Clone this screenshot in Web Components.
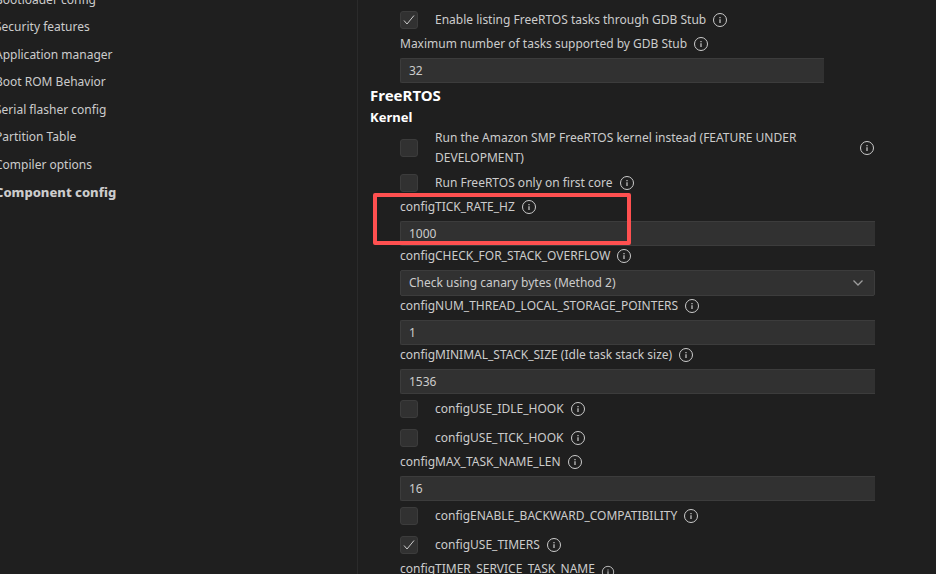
<!DOCTYPE html>
<html lang="en">
<head>
<meta charset="utf-8">
<title>SDK Configuration editor</title>
<style>
:root {
  --bg: #1f1f1f;
  --fg: #cccccc;
  --heading: #ffffff;
  --field: #313131;
  --border: #3c3c3c;
  --mark: #ff5050;
}
html {
  height: 100%;
}
body {
  margin: 0;
  height: 100%;
  overflow: hidden;
  background: var(--bg);
  color: var(--fg);
  font: 12px/20px "Noto Sans", sans-serif;
}
</style>
</head>
<body>
<config-editor>
  <menu-list slot="menu">
    <menu-entry>Bootloader config</menu-entry>
    <menu-entry>Security features</menu-entry>
    <menu-entry>Application manager</menu-entry>
    <menu-entry>Boot ROM Behavior</menu-entry>
    <menu-entry>Serial flasher config</menu-entry>
    <menu-entry>Partition Table</menu-entry>
    <menu-entry>Compiler options</menu-entry>
    <menu-entry selected>Component config</menu-entry>
  </menu-list>

  <config-group nested>
    <config-check checked>Enable listing FreeRTOS tasks through GDB Stub</config-check>
    <config-field value="32">Maximum number of tasks supported by GDB Stub</config-field>
  </config-group>

  <config-group>
    <h2 slot="title">FreeRTOS</h2>
    <h3 slot="title">Kernel</h3>
    <config-check>Run the Amazon SMP FreeRTOS kernel instead (FEATURE UNDER DEVELOPMENT)</config-check>
    <config-check>Run FreeRTOS only on first core</config-check>
    <config-field value="1000" marked>configTICK_RATE_HZ</config-field>
    <config-select value="Check using canary bytes (Method 2)">configCHECK_FOR_STACK_OVERFLOW</config-select>
    <config-field value="1">configNUM_THREAD_LOCAL_STORAGE_POINTERS</config-field>
    <config-field value="1536">configMINIMAL_STACK_SIZE (Idle task stack size)</config-field>
    <config-check>configUSE_IDLE_HOOK</config-check>
    <config-check>configUSE_TICK_HOOK</config-check>
    <config-field value="16">configMAX_TASK_NAME_LEN</config-field>
    <config-check>configENABLE_BACKWARD_COMPATIBILITY</config-check>
    <config-check checked>configUSE_TIMERS</config-check>
    <config-field value="Tmr Svc" type="string">configTIMER_SERVICE_TASK_NAME</config-field>
  </config-group>
</config-editor>

<script>
// Attach an open shadow root filled from a template string
function render(host, html) {
  const template = document.createElement('template');
  template.innerHTML = html;
  host.attachShadow({mode: 'open'}).appendChild(template.content.cloneNode(true));
}

// Page split: menu on the left, settings on the right
class ConfigEditor extends HTMLElement {
  constructor() {
    super();
    render(this, `
      <style>
        :host {
          display: flex;
          height: 100%;
          overflow: hidden;
        }
        nav {
          flex: none;
          width: 357px;
          border-right: 1px solid #2b2b2b;
          overflow: hidden;
        }
        main {
          flex: 1;
          min-width: 0;
          padding: 5px 61px 0 12px;
        }
      </style>
      <nav><slot name="menu"></slot></nav>
      <main><slot></slot></main>
    `);
  }
}

// Menu is scrolled a little, so its first entry and left edge are cut off
class MenuList extends HTMLElement {
  constructor() {
    super();
    render(this, `
      <style>
        :host {
          display: grid;
          grid-auto-rows: 1fr;
          min-height: 220px;
          margin: -14px 0 0 -5px;
        }
      </style>
      <slot></slot>
    `);
  }
}

class MenuEntry extends HTMLElement {
  constructor() {
    super();
    render(this, `
      <style>
        :host {
          display: flex;
          align-items: center;
        }
        :host([selected]) {
          font-size: 13px;
          font-weight: 800;
        }
        a {
          color: inherit;
          text-decoration: none;
          white-space: nowrap;
        }
      </style>
      <a href="#"><slot></slot></a>
    `);
  }
}

class ConfigGroup extends HTMLElement {
  constructor() {
    super();
    render(this, `
      <style>
        :host {
          display: block;
        }
        :host([nested]) {
          padding-right: 51px;
        }
        .items {
          padding-left: 30px;
        }
        ::slotted(h2) {
          margin: 0;
          color: var(--heading);
          font-size: 15px;
          line-height: 24px;
        }
        ::slotted(h3) {
          margin: 0;
          color: var(--heading);
          font-size: 13px;
          line-height: 21px;
        }
      </style>
      <slot name="title"></slot>
      <div class="items"><slot></slot></div>
    `);
  }
}

class InfoButton extends HTMLElement {
  constructor() {
    super();
    render(this, `
      <style>
        :host {
          display: flex;
          flex: none;
        }
        button {
          display: flex;
          padding: 0;
          border: 0;
          background: none;
          color: inherit;
          cursor: pointer;
        }
        svg {
          width: var(--icon-size, 16px);
          height: var(--icon-size, 16px);
        }
      </style>
      <button type="button" aria-label="Info">
        <svg viewBox="0 0 16 16" fill="none" stroke="currentColor">
          <circle cx="8" cy="8" r="6.5"/>
          <path d="M8 7.200v3.800M8 5v1.200" stroke-width="1.2"/>
        </svg>
      </button>
    `);
  }
}

class ConfigCheck extends HTMLElement {
  constructor() {
    super();
    render(this, `
      <style>
        :host {
          display: flex;
          align-items: center;
          gap: 6px;
          min-height: 29px;
        }
        .box {
          display: grid;
          flex: none;
          margin-right: 11px;
        }
        input, svg {
          grid-area: 1 / 1;
        }
        input {
          appearance: none;
          box-sizing: border-box;
          width: 18px;
          height: 18px;
          margin: 0;
          border: 1px solid var(--border);
          border-radius: 3px;
          background: var(--field);
        }
        svg {
          place-self: center;
          visibility: hidden;
          pointer-events: none;
        }
        input:checked + svg {
          visibility: visible;
        }
      </style>
      <span class="box">
        <input type="checkbox" id="value">
        <svg width="16" height="16" viewBox="0 0 16 16" fill="none" stroke="currentColor">
          <path d="M3 8.500l3 3.500L13 3.500"/>
        </svg>
      </span>
      <label for="value"><slot></slot></label>
      <info-button></info-button>
    `);
    this.shadowRoot.querySelector('input').checked = this.hasAttribute('checked');
  }
}

// Label row shared by the text and the select settings
const fieldStyle = `
  :host {
    display: grid;
    gap: 4px;
    position: relative;
  }
  .label {
    display: flex;
    align-items: center;
    gap: 6px;
  }
  input, select {
    box-sizing: border-box;
    width: 100%;
    height: 25px;
    margin: 0;
    padding: 0 8px;
    border: 1px solid var(--border);
    border-radius: 2px;
    background: var(--field);
    color: inherit;
    font: inherit;
  }
`;

class ConfigField extends HTMLElement {
  constructor() {
    super();
    render(this, `
      <style>
        ${fieldStyle}
        :host([type="string"]) .label {
          --icon-size: 14px;
          align-items: flex-end;
        }
        input {
          border-right: 0;
          border-radius: 2px 0 0 2px;
        }
        .mark {
          display: none;
          position: absolute;
          box-sizing: border-box;
          left: -27px;
          top: -4px;
          width: 258px;
          height: 52px;
          border: 4px solid var(--mark);
          border-radius: 2px;
          pointer-events: none;
        }
        :host([marked]) .mark {
          display: block;
        }
      </style>
      <div class="label">
        <label for="value"><slot></slot></label>
        <info-button></info-button>
      </div>
      <input type="text" id="value">
      <div class="mark"></div>
    `);
    this.shadowRoot.querySelector('input').value = this.getAttribute('value');
  }
}

class ConfigSelect extends HTMLElement {
  constructor() {
    super();
    render(this, `
      <style>
        ${fieldStyle}
        .select {
          display: grid;
          align-items: center;
        }
        select, svg {
          grid-area: 1 / 1;
        }
        select {
          appearance: none;
          height: 26px;
        }
        svg {
          justify-self: end;
          margin-right: 9px;
          pointer-events: none;
        }
      </style>
      <div class="label">
        <label for="value"><slot></slot></label>
        <info-button></info-button>
      </div>
      <div class="select">
        <select id="value"><option></option></select>
        <svg width="16" height="16" viewBox="0 0 16 16" fill="none" stroke="#9d9d9d" stroke-width="1.3">
          <path d="M3.5 5.5L8 10l4.500-4.500"/>
        </svg>
      </div>
    `);
    this.shadowRoot.querySelector('option').textContent = this.getAttribute('value');
  }
}

customElements.define('info-button', InfoButton);
customElements.define('config-editor', ConfigEditor);
customElements.define('menu-list', MenuList);
customElements.define('menu-entry', MenuEntry);
customElements.define('config-group', ConfigGroup);
customElements.define('config-check', ConfigCheck);
customElements.define('config-field', ConfigField);
customElements.define('config-select', ConfigSelect);
</script>
</body>
</html>
